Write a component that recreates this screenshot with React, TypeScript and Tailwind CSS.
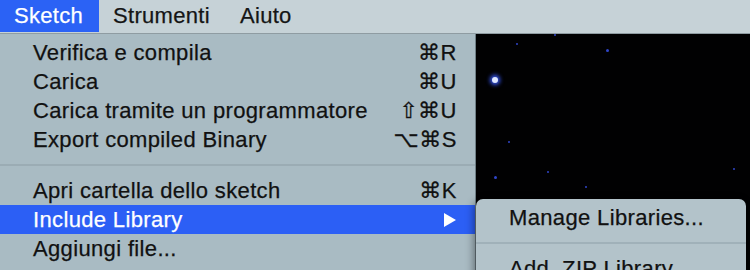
import type { ReactNode } from "react";

type Item = { label: string; keys?: string; active?: boolean; sub?: boolean };

const groupA: Item[] = [
  { label: "Verifica e compila", keys: "⌘R" },
  { label: "Carica", keys: "⌘U" },
  { label: "Carica tramite un programmatore", keys: "⇧⌘U" },
  { label: "Export compiled Binary", keys: "⌥⌘S" },
];

const groupB: Item[] = [
  { label: "Apri cartella dello sketch", keys: "⌘K" },
  { label: "Include Library", active: true, sub: true },
  { label: "Aggiungi file..." },
];

// little blue stars on the desktop behind the menu
const stars = [
  { x: 492, y: 77, s: 6, glow: true },
  { x: 606, y: 49, s: 3 },
  { x: 516, y: 43, s: 2 },
  { x: 554, y: 34, s: 2 },
  { x: 494, y: 176, s: 3 },
  { x: 733, y: 168, s: 2 },
  { x: 547, y: 171, s: 2 },
  { x: 585, y: 186, s: 2 },
  { x: 508, y: 141, s: 2 },
];

function MenuRow({ item }: { item: Item }) {
  return (
    <div
      className={`flex h-[29px] items-center pl-[33px] pr-[18px] ${
        item.active ? "bg-[#2c5ff5] text-white" : "text-[#111]"
      }`}
    >
      <span className="flex-1 tracking-[0.35px]">{item.label}</span>
      {item.keys && <span className="tracking-[0.5px]">{item.keys}</span>}
      {item.sub && (
        <svg width="12" height="14" viewBox="0 0 12 14" className="mr-[1px]">
          <path d="M0 0 L12 7 L0 14 Z" fill="white" />
        </svg>
      )}
    </div>
  );
}

function Separator({ tone }: { tone: string }) {
  return (
    <div className="flex h-[22px] items-center">
      <div className={`h-[2px] w-full ${tone}`} />
    </div>
  );
}

function BarItem({ children, active, w }: { children: ReactNode; active?: boolean; w: string }) {
  return (
    <div
      className={`flex h-full items-center pl-[14px] tracking-[0.3px] ${w} ${
        active ? "bg-[#2b62f5] text-white" : "text-[#151515]"
      }`}
    >
      {children}
    </div>
  );
}

export default function App() {
  return (
    <div
      className="relative h-[270px] w-[750px] overflow-hidden bg-[#010102] text-[22px] leading-none [-webkit-text-stroke:0.25px]"
      style={{ fontFamily: '"Liberation Sans", "DejaVu Sans", Arial, sans-serif' }}
    >
      {/* menu bar */}
      <div className="flex h-[34px] border-b border-[#8f9ca2] bg-[#c6d2d7] pb-[1px]">
        <BarItem active w="w-[99px]">Sketch</BarItem>
        <BarItem w="w-[127px]">Strumenti</BarItem>
        <BarItem w="w-[100px]">Aiuto</BarItem>
      </div>

      <div className="flex">
        {/* Sketch menu */}
        <div className="w-[476px] border-r border-[#6f7f86] bg-[#a9bbc3] pt-[4px] pb-[40px]">
          {groupA.map((it) => (
            <MenuRow key={it.label} item={it} />
          ))}
          <Separator tone="bg-[#9bacb4]" />
          {groupB.map((it) => (
            <MenuRow key={it.label} item={it} />
          ))}
        </div>

        {/* desktop */}
        <div className="flex-1" />
      </div>

      {stars.map((s, i) => (
        <div
          key={i}
          className={`absolute rounded-full ${s.glow ? "bg-[#dfe8ff] shadow-[0_0_4px_2px_#3a5cff]" : "bg-[#2f45c8]"}`}
          style={{ left: s.x, top: s.y, width: s.s, height: s.s }}
        />
      ))}

      {/* Include Library submenu */}
      <div className="absolute left-[476px] top-[199px] w-[270px] rounded-t-[7px] bg-[#b3c3ca] pt-[4px] pb-[30px] text-[#111] shadow-[-2px_2px_8px_rgba(0,0,0,0.45)]">
        <div className="flex h-[29px] items-center pl-[33px] tracking-[0.35px]">Manage Libraries...</div>
        <Separator tone="bg-[#a0b1b9]" />
        <div className="flex h-[29px] items-center pl-[33px] tracking-[0.35px]">Add .ZIP Library...</div>
      </div>
    </div>
  );
}
